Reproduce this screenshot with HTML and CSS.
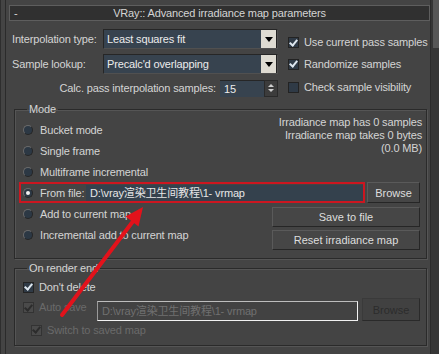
FILE: index.html
```html
<!DOCTYPE html>
<html lang="en">
<head>
  <meta charset="UTF-8">
  <title>VRay Irradiance map parameters</title>
  <link rel="stylesheet" href="styles.css">
</head>
<body>
  <div class="frame">
    <div class="rollout">
      <div class="title-bar">
        <span class="collapse">-</span>
        <span class="title-text">VRay:: Advanced irradiance map parameters</span>
      </div>

      <div class="params">
        <span class="field-label">Interpolation type:</span>
        <div class="dropdown"><span>Least squares fit</span><span class="drop-btn"></span></div>
        <div class="check on first"><span class="box"></span>Use current pass samples</div>

        <span class="field-label">Sample lookup:</span>
        <div class="dropdown"><span>Precalc'd overlapping</span><span class="drop-btn"></span></div>
        <div class="check on"><span class="box"></span>Randomize samples</div>

        <div class="spin-row">
          <span>Calc. pass interpolation samples:</span>
          <div class="spinner">
            <span class="spin-value">15</span>
            <span class="spin-btns"><i class="up"></i><i class="down"></i></span>
          </div>
        </div>
        <div class="check"><span class="box"></span>Check sample visibility</div>
      </div>

      <fieldset class="group mode">
        <legend>Mode</legend>
        <div class="mode-top">
          <div class="radio-list">
            <div class="radio"><span class="dot"></span>Bucket mode</div>
            <div class="radio"><span class="dot"></span>Single frame</div>
            <div class="radio"><span class="dot"></span>Multiframe incremental</div>
          </div>
          <div class="info">
            Irradiance map has 0 samples<br>
            Irradiance map takes 0 bytes<br>
            (0.0 MB)
          </div>
        </div>

        <div class="from-file">
          <div class="highlight">
            <div class="radio"><span class="dot on"></span>From file:</div>
            <div class="path-field">D:\vray渲染卫生间教程\1- vrmap</div>
          </div>
          <button class="btn browse">Browse</button>
        </div>

        <div class="mode-bottom">
          <div class="radio-list">
            <div class="radio"><span class="dot"></span>Add to current map</div>
            <div class="radio"><span class="dot"></span>Incremental add to current map</div>
          </div>
          <div class="btn-col">
            <button class="btn wide">Save to file</button>
            <button class="btn wide">Reset irradiance map</button>
          </div>
        </div>
      </fieldset>

      <fieldset class="group render-end">
        <legend>On render end</legend>
        <div class="check on row-delete"><span class="box"></span>Don't delete</div>
        <div class="auto-row">
          <div class="check on disabled"><span class="box"></span>Auto save</div>
          <div class="path-field off">D:\vray渲染卫生间教程\1- vrmap</div>
          <button class="btn browse off">Browse</button>
        </div>
        <div class="check on disabled switch"><span class="box"></span>Switch to saved map</div>
      </fieldset>
    </div>
    <div class="scrollbar"><div class="thumb"></div></div>
  </div>

  <svg class="annotation" width="439" height="354" viewBox="0 0 439 354">
    <line x1="62" y1="315" x2="134" y2="220" stroke="#e3121b" stroke-width="4" stroke-linecap="round"/>
    <polygon points="143,207 138.5,226.5 125.5,216.5" fill="#e3121b"/>
  </svg>
</body>
</html>
```

FILE: styles.css
```css
body {
  margin: 0;
  background: #444;
  font-family: "Liberation Sans", Arial, sans-serif;
  font-size: 11px;
  letter-spacing: -0.15px;
  color: #d4d4d4;
  position: relative;
  overflow: hidden;
}
.frame {
  display: flex;
  height: 354px;
  box-sizing: border-box;
  border-left: 1px solid #2e2e2e;
  padding-left: 4px;
}
.rollout {
  flex: 1;
  min-width: 0;
  border-left: 1px solid #2b2b2b;
  border-right: 1px solid #2b2b2b;
}
.scrollbar {
  width: 8px;
  background: #363636;
}
.thumb {
  height: 48px;
  background: #575757;
  margin-left: 2px;
}

.title-bar {
  margin: 5px 0 0 3px;
  height: 16px;
  box-sizing: border-box;
  border: 1px solid #5e5e5e;
  background: #303030;
  display: grid;
  grid-template-columns: 1fr auto 1fr;
  align-items: center;
  line-height: 13px;
}
.collapse {
  padding-left: 4px;
}

.params {
  margin: 8px 0 0 6px;
  display: grid;
  grid-template-columns: 91px 175px minmax(0, 1fr);
  grid-template-rows: 20px 20px 17px;
  row-gap: 5px;
  align-items: center;
  white-space: nowrap;
}
.params .check {
  margin-left: 10px;
}
.dropdown {
  display: flex;
  align-items: center;
  height: 20px;
  box-sizing: border-box;
  background: #37434f;
  border: 1px solid;
  border-color: #262626 #505050 #505050 #262626;
  padding-left: 3px;
  color: #ececec;
}
.drop-btn {
  margin-left: auto;
  width: 15px;
  height: 18px;
  background: #dedbd2;
  border-right: 1px solid #222;
  display: flex;
  align-items: center;
  justify-content: center;
}
.drop-btn::after {
  content: "";
  border-top: 5px solid #000;
  border-left: 4px solid transparent;
  border-right: 4px solid transparent;
}
.spin-row {
  grid-column: 1 / 3;
  display: flex;
  justify-content: flex-end;
  align-items: center;
  gap: 4px;
  margin-top: 1px;
}
.spinner {
  display: flex;
  width: 58px;
  height: 17px;
}
.spin-value {
  flex: 1;
  background: #37434f;
  color: #ececec;
  padding-left: 4px;
  line-height: 17px;
  border-top: 1px solid #262626;
  box-sizing: border-box;
}
.spin-btns {
  width: 14px;
  background: #3c3c3c;
  border: 1px solid #2a2a2a;
  box-sizing: border-box;
  display: flex;
  flex-direction: column;
  align-items: center;
  justify-content: center;
  gap: 2px;
}
.spin-btns i {
  border-left: 3px solid transparent;
  border-right: 3px solid transparent;
}
.spin-btns .up { border-bottom: 3px solid #cfcfcf; }
.spin-btns .down { border-top: 3px solid #cfcfcf; }

.check {
  display: flex;
  align-items: center;
  gap: 5px;
  line-height: 13px;
}
.check.first {
  align-self: end;
}
.box {
  width: 11px;
  height: 11px;
  flex: none;
  box-sizing: border-box;
  background: #2f3a46;
  border: 1px solid #232323;
  display: flex;
  align-items: center;
  justify-content: center;
}
.check.on .box::after {
  content: "";
  width: 3px;
  height: 6px;
  margin-top: -2px;
  border: solid #dde6ee;
  border-width: 0 2px 2px 0;
  transform: rotate(40deg);
}
.check.disabled {
  color: #6a6a6a;
}
.check.disabled .box {
  background: #4a4a4a;
  border-color: #333;
}
.check.disabled .box::after {
  border-color: #2c2c2c;
}

.group {
  margin: 7px 3px 0 8px;
  padding: 0 4px 8px 8px;
  border: 1px solid #2a2a2a;
  box-shadow: 1px 1px 0 #555, inset 1px 1px 0 #555;
  min-width: 0;
}
.group legend {
  padding: 0 2px;
  margin-left: 4px;
  line-height: 13px;
}
.mode-top {
  display: flex;
  justify-content: space-between;
}
.mode-top .radio-list {
  padding-top: 3px;
}
.info {
  text-align: right;
  line-height: 13px;
}
.radio {
  display: flex;
  align-items: center;
  gap: 7px;
  height: 21px;
}
.dot {
  width: 10px;
  height: 10px;
  flex: none;
  box-sizing: border-box;
  border-radius: 50%;
  background: #2c3844;
  border: 1px solid;
  border-color: #6a6a6a #262626 #262626 #6a6a6a;
  display: flex;
  align-items: center;
  justify-content: center;
}
.dot.on::after {
  content: "";
  width: 4px;
  height: 4px;
  border-radius: 50%;
  background: #f0f0f0;
}

.from-file {
  display: flex;
  align-items: center;
  margin-left: -4px;
}
.highlight {
  display: flex;
  align-items: center;
  width: 346px;
  height: 21px;
  box-sizing: border-box;
  border: 2px solid #cc1620;
  padding-left: 2px;
}
.highlight .radio {
  height: auto;
  width: 63px;
}
.path-field {
  flex: 1;
  height: 16px;
  line-height: 16px;
  background: #34414d;
  color: #e6e6e6;
  padding-left: 4px;
  white-space: nowrap;
  font-family: "Liberation Sans", "Noto Sans CJK SC", sans-serif;
}
.btn {
  height: 21px;
  box-sizing: border-box;
  background: #464646;
  border: 1px solid;
  border-color: #5a5a5a #262626 #262626 #5a5a5a;
  color: #dedede;
  font: inherit;
  padding: 0;
}
.browse {
  width: 53px;
  margin-left: 2px;
}
.mode-bottom {
  display: flex;
}
.btn-col {
  margin-left: auto;
  margin-right: 2px;
  padding-top: 4px;
  display: flex;
  flex-direction: column;
  gap: 3px;
}
.btn.wide {
  width: 148px;
  height: 20px;
}

.render-end {
  margin-top: 3px;
  padding-bottom: 6px;
}
.row-delete {
  height: 20px;
  padding-top: 2px;
}
.auto-row {
  display: flex;
  align-items: flex-end;
  height: 24px;
}
.auto-row .check {
  width: 74px;
  align-self: center;
  margin-top: -3px;
}
.path-field.off {
  flex: none;
  width: 261px;
  height: 20px;
  line-height: 18px;
  box-sizing: border-box;
  background: #424242;
  color: #707070;
  border: 1px solid;
  border-color: #bdbdbd #f2f2f2 #f2f2f2 #9a9a9a;
}
.btn.off {
  width: 58px;
  height: 23px;
  margin-left: 4px;
  background: #414141;
  color: #2c2c2c;
  border-color: #3a3a3a #2a2a2a #2a2a2a #3a3a3a;
}
.switch {
  height: 18px;
  padding-left: 8px;
}

.annotation {
  position: absolute;
  left: 0;
  top: 0;
  pointer-events: none;
}
```
